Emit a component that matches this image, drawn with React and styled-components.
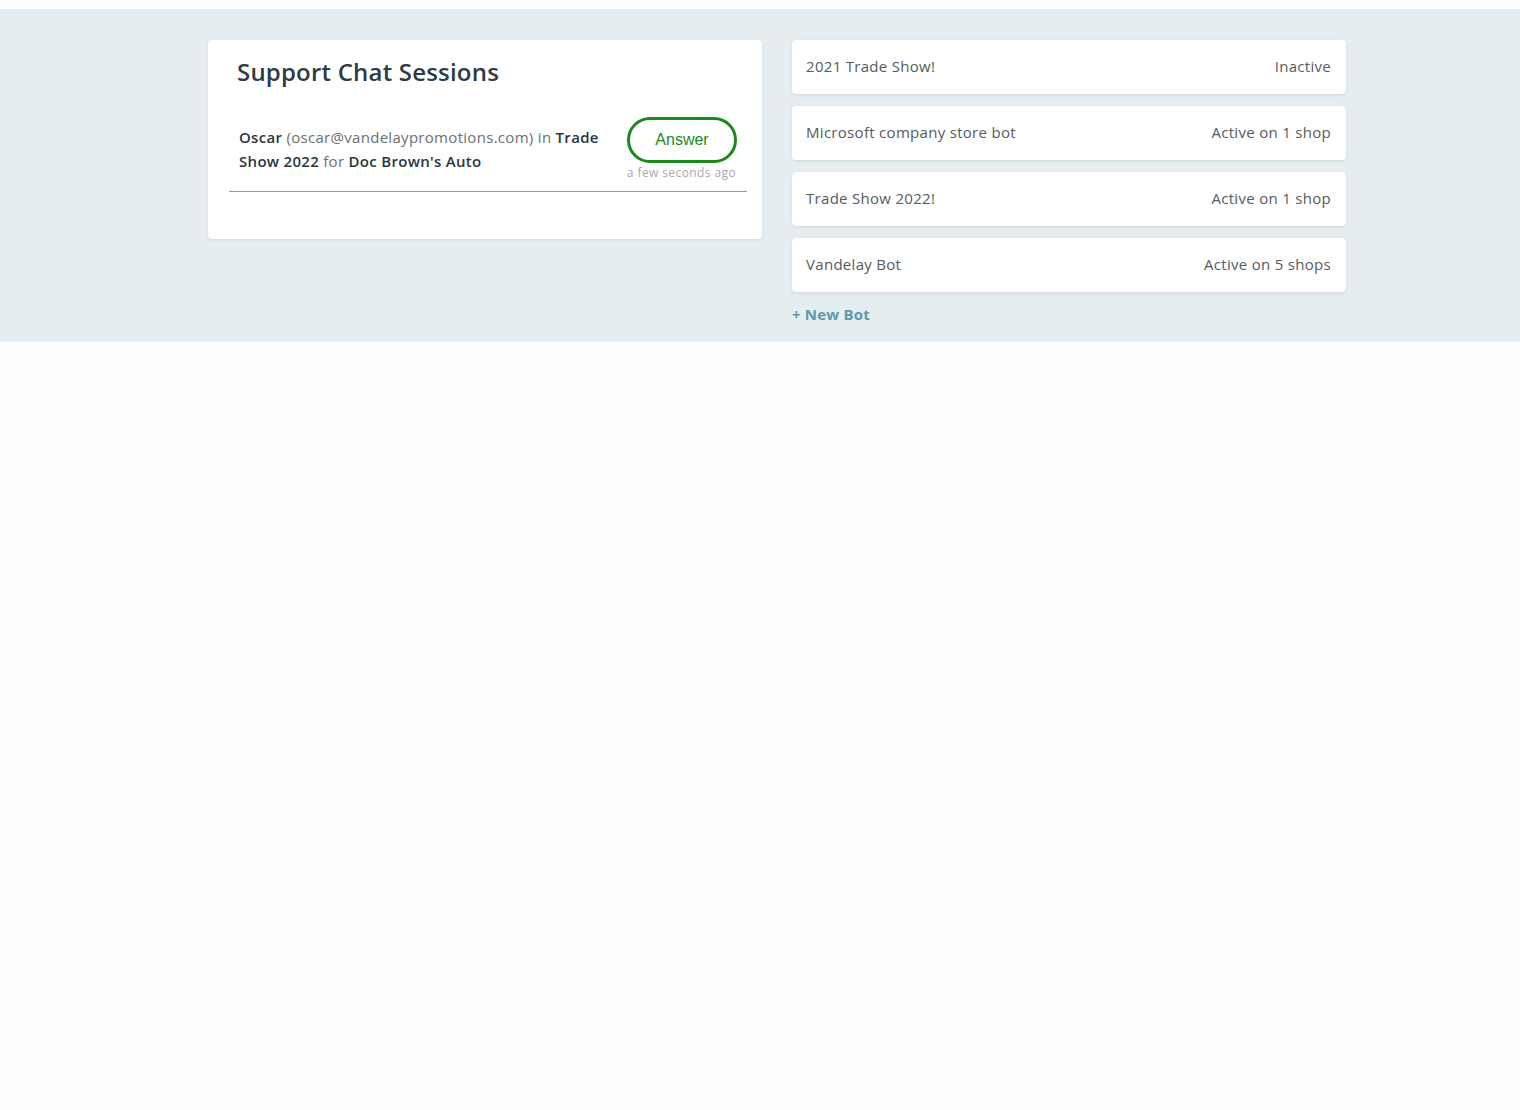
import React from 'react'
import styled, { createGlobalStyle } from 'styled-components'

const GlobalStyle = createGlobalStyle`
  body {
    margin: 0;
    background: #fefefe;
    font-family: 'Open Sans', Lato, sans-serif;
  }
`

const Page = styled.div`
  padding-top: 9px;
  min-height: 100vh;
  box-sizing: border-box;
`

const Band = styled.div`
  background: #e5edf0;
  padding: 31px 0 0 34px;
  height: 333px;
  box-sizing: border-box;
`

const Columns = styled.div`
  display: grid;
  grid-template-columns: 554px 554px;
  gap: 30px;
  justify-content: center;
  align-items: start;
`

const Card = styled.div`
  background: #fff;
  border-radius: 4px;
  box-shadow: 0 1px 3px rgba(40, 60, 80, 0.1);
  padding: 15px 15px 47px 21px;
`

const Title = styled.h2`
  margin: 0 0 0 8px;
  font-size: 24px;
  font-weight: 600;
  color: #2e3a45;
  letter-spacing: 0.2px;
`

const Session = styled.div`
  display: flex;
  justify-content: space-between;
  align-items: flex-start;
  padding: 18px 10px 10px 10px;
  border-bottom: 1px solid #9a9a9a;
  margin-top: 11px;
`

const SessionText = styled.div`
  font-size: 15px;
  letter-spacing: 0.3px;
  line-height: 24px;
  color: #6b6f74;
  width: 372px;
  margin-top: 8px;

  b {
    color: #2b3540;
    font-weight: 600;
  }
`

const Side = styled.div`
  display: flex;
  flex-direction: column;
  align-items: flex-end;
`

const AnswerButton = styled.button`
  width: 110px;
  height: 46px;
  border: 3px solid #1b881b;
  border-radius: 23px;
  background: #fff;
  color: #1b881b;
  font-family: 'Liberation Sans', Arial, sans-serif;
  font-size: 16px;
  cursor: pointer;
`

const Ago = styled.span`
  margin-top: 1px;
  font-size: 12px;
  letter-spacing: 0.4px;
  color: #a8a8a8;
  margin-right: 1px;
`

const BotList = styled.div`
  display: flex;
  flex-direction: column;
  gap: 12px;
`

const BotRow = styled.div`
  background: #fff;
  border-radius: 4px;
  box-shadow: 0 1px 3px rgba(40, 60, 80, 0.12);
  height: 54px;
  padding: 0 15px 2px 14px;
  display: flex;
  align-items: center;
  justify-content: space-between;
  font-size: 15px;
  letter-spacing: 0.3px;
  color: #555b61;
  box-sizing: border-box;
`

const NewBot = styled.a`
  font-size: 15px;
  letter-spacing: 0.2px;
  line-height: 20px;
  font-weight: 700;
  color: #5b9bad;
  text-decoration: none;
  cursor: pointer;
`

const bots = [
  { name: '2021 Trade Show!', status: 'Inactive' },
  { name: 'Microsoft company store bot', status: 'Active on 1 shop' },
  { name: 'Trade Show 2022!', status: 'Active on 1 shop' },
  { name: 'Vandelay Bot', status: 'Active on 5 shops' },
]

export default function App() {
  return (
    <Page>
      <GlobalStyle />
      <Band>
        <Columns>
          <Card>
            <Title>Support Chat Sessions</Title>
            <Session>
              <SessionText>
                <b>Oscar</b> (oscar@vandelaypromotions.com) in <b>Trade Show 2022</b> for{' '}
                <b>Doc Brown's Auto</b>
              </SessionText>
              <Side>
                <AnswerButton>Answer</AnswerButton>
                <Ago>a few seconds ago</Ago>
              </Side>
            </Session>
          </Card>
          <BotList>
            {bots.map(b => (
              <BotRow key={b.name}>
                <span>{b.name}</span>
                <span>{b.status}</span>
              </BotRow>
            ))}
            <NewBot>+ New Bot</NewBot>
          </BotList>
        </Columns>
      </Band>
    </Page>
  )
}
